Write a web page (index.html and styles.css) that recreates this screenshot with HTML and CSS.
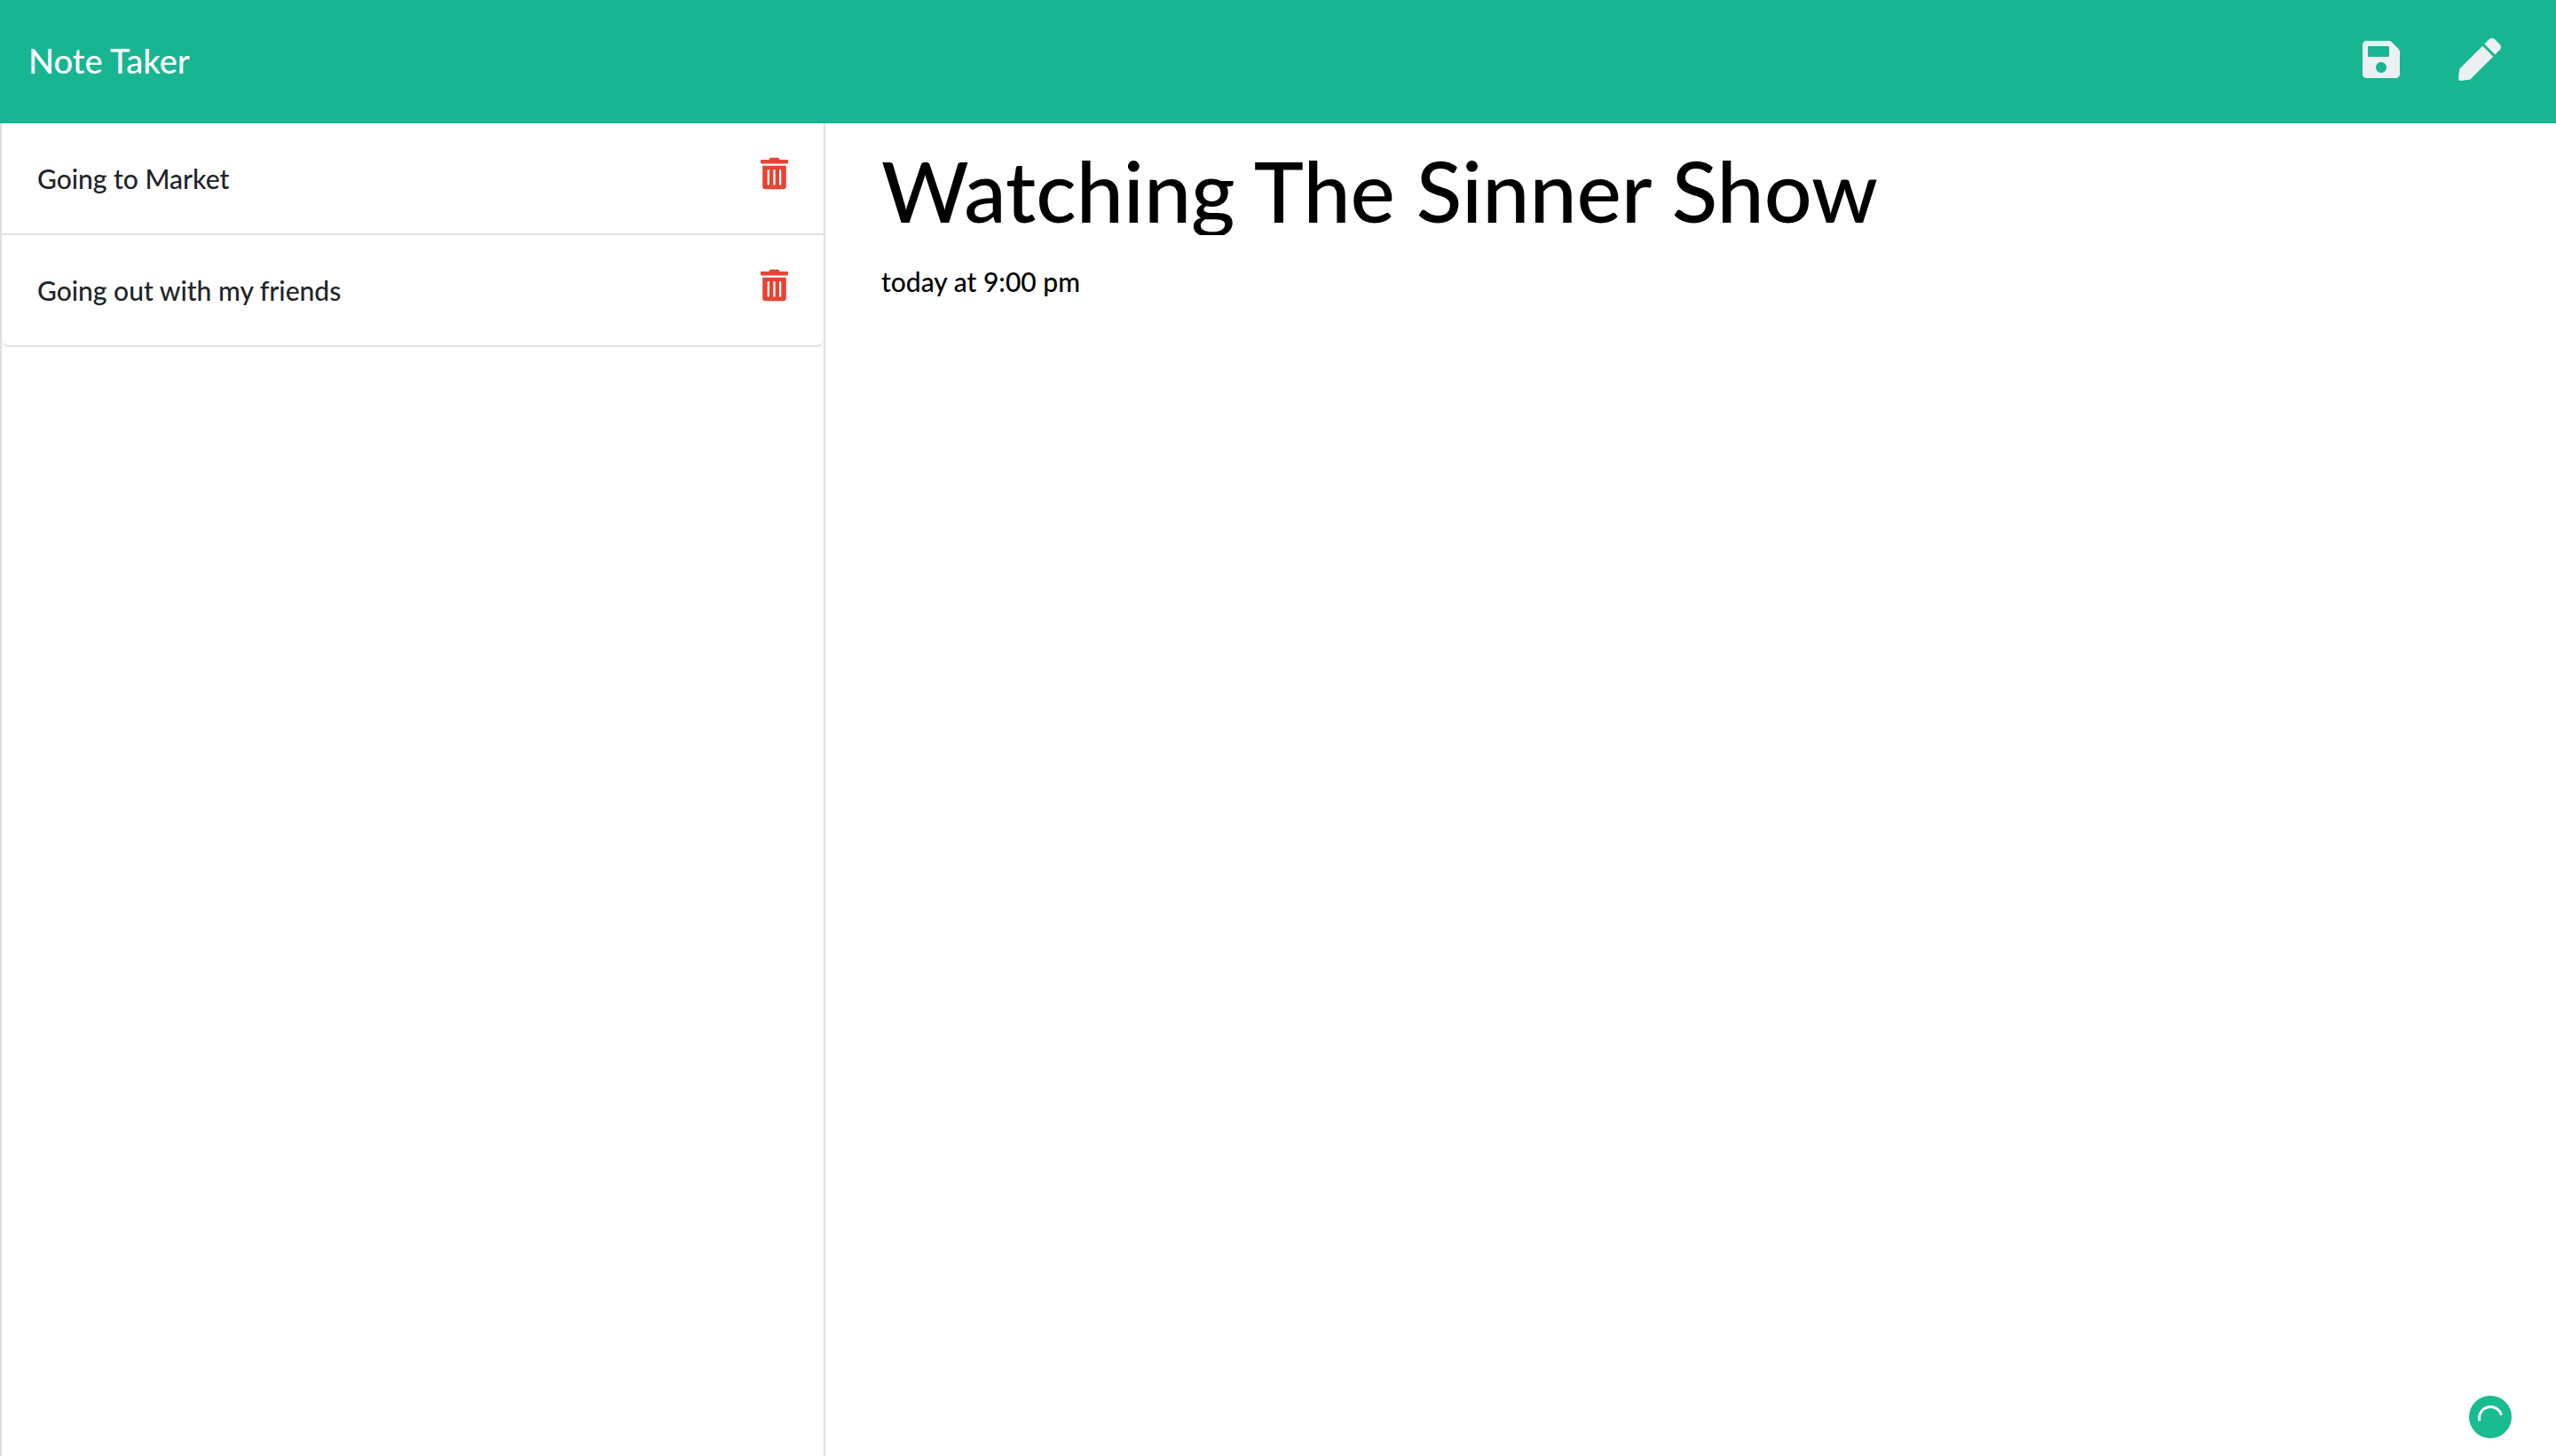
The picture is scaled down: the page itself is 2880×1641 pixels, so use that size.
FILE: index.html
```
<!DOCTYPE html>
<html lang="en">
<head>
<meta charset="utf-8">
<meta name="viewport" content="width=device-width, initial-scale=1">
<title>Note Taker</title>
<link rel="stylesheet" href="styles.css">
</head>
<body>
<header class="navbar">
  <a class="brand" href="#">Note Taker</a>
  <div class="actions">
    <button class="icon-button" type="button" aria-label="Save note">
      <svg class="save-icon" viewBox="0 0 448 512"><path d="M433.941 129.941l-83.882-83.882A48 48 0 0 0 316.118 32H48C21.49 32 0 53.49 0 80v352c0 26.51 21.49 48 48 48h352c26.51 0 48-21.49 48-48V163.882a48 48 0 0 0-14.059-33.941zM224 416c-35.346 0-64-28.654-64-64 0-35.346 28.654-64 64-64s64 28.654 64 64c0 35.346-28.654 64-64 64zm96-304.52V212c0 6.627-5.373 12-12 12H76c-6.627 0-12-5.373-12-12V108c0-6.627 5.373-12 12-12h228.52c3.183 0 6.235 1.264 8.485 3.515l3.48 3.48A11.996 11.996 0 0 1 320 111.48z"/></svg>
    </button>
    <button class="icon-button" type="button" aria-label="New note">
      <svg class="pen-icon" viewBox="0 0 512 512"><path d="M290.74 93.24l128.02 128.02-277.99 277.99-114.14 12.6C11.35 513.54-1.56 500.62.14 485.34l12.7-114.22 277.9-277.88zm207.2-19.06l-60.11-60.11c-18.75-18.75-49.16-18.75-67.91 0l-56.55 56.55 128.02 128.02 56.55-56.55c18.75-18.76 18.75-49.16 0-67.91z"/></svg>
    </button>
  </div>
</header>
<main class="layout">
  <nav class="sidebar" aria-label="Notes">
    <ul class="note-list">
      <li class="note-item">
        <a class="note-link" href="#">Going to Market</a>
        <button class="icon-button delete" type="button" aria-label="Delete Going to Market">
          <svg class="trash-icon" viewBox="0 0 448 512"><path d="M32 464a48 48 0 0 0 48 48h288a48 48 0 0 0 48-48V128H32zm272-256a16 16 0 0 1 32 0v224a16 16 0 0 1-32 0zm-96 0a16 16 0 0 1 32 0v224a16 16 0 0 1-32 0zm-96 0a16 16 0 0 1 32 0v224a16 16 0 0 1-32 0zM432 32H312l-9.4-18.7A24 24 0 0 0 281.1 0H166.8a23.72 23.72 0 0 0-21.4 13.3L136 32H16A16 16 0 0 0 0 48v32a16 16 0 0 0 16 16h416a16 16 0 0 0 16-16V48a16 16 0 0 0-16-16z"/></svg>
        </button>
      </li>
      <li class="note-item">
        <a class="note-link" href="#">Going out with my friends</a>
        <button class="icon-button delete" type="button" aria-label="Delete Going out with my friends">
          <svg class="trash-icon" viewBox="0 0 448 512"><path d="M32 464a48 48 0 0 0 48 48h288a48 48 0 0 0 48-48V128H32zm272-256a16 16 0 0 1 32 0v224a16 16 0 0 1-32 0zm-96 0a16 16 0 0 1 32 0v224a16 16 0 0 1-32 0zm-96 0a16 16 0 0 1 32 0v224a16 16 0 0 1-32 0zM432 32H312l-9.4-18.7A24 24 0 0 0 281.1 0H166.8a23.72 23.72 0 0 0-21.4 13.3L136 32H16A16 16 0 0 0 0 48v32a16 16 0 0 0 16 16h416a16 16 0 0 0 16-16V48a16 16 0 0 0-16-16z"/></svg>
        </button>
      </li>
    </ul>
  </nav>
  <form class="editor">
    <input class="note-title" type="text" aria-label="Note title" value="Watching The Sinner Show">
    <textarea class="note-text" aria-label="Note text">today at 9:00 pm</textarea>
  </form>
</main>
<div class="status-badge" role="status" aria-label="Loading">
  <svg viewBox="0 0 48 48"><circle class="disc" cx="24" cy="24" r="24"/><path class="arc" d="M12 28.3A12.6 12.6 0 1 1 36.4 22"/></svg>
</div>
</body>
</html>
```
FILE: styles.css
```
*, *::before, *::after {
  box-sizing: border-box;
}

body {
  display: flex;
  flex-direction: column;
  min-height: 100vh;
  margin: 0;
  background: #fff;
  color: #212529;
  font-family: Lato, "Liberation Sans", sans-serif;
  font-size: 30px;
  font-weight: 500;
  line-height: 48px;
}

a {
  color: inherit;
  text-decoration: none;
}

svg {
  display: block;
  fill: currentColor;
}

.navbar {
  display: flex;
  align-items: center;
  justify-content: space-between;
  padding: 38px 62px 41px 32px;
  background: #18b592;
  color: #fff;
}

.brand {
  font-size: 38px;
  line-height: 60px;
}

.actions {
  display: flex;
  gap: 66px;
  color: #ecf0f1;
}

.icon-button {
  padding: 0;
  border: 0;
  background: none;
  color: inherit;
  cursor: pointer;
}

.actions .icon-button {
  padding-bottom: 2px;
}

.save-icon {
  width: 42px;
  height: 48px;
}

.pen-icon {
  width: 48px;
  height: 48px;
}

.layout {
  display: grid;
  flex: 1;
  grid-template-columns: 1fr 2fr;
}

.sidebar {
  margin-right: 30px;
  border: solid #dfdfdf;
  border-width: 0 2px;
}

.note-list {
  margin: 0;
  padding: 0;
  list-style: none;
}

.note-item {
  display: flex;
  align-items: flex-start;
  justify-content: space-between;
  padding: 38px 40px;
  border-bottom: 2px solid #dfdfdf;
}

.note-item:last-child {
  border-radius: 0 0 8px 8px;
}

.delete {
  color: #e64434;
}

.trash-icon {
  width: 31px;
  height: 37px;
}

.editor {
  display: flex;
  flex-direction: column;
  gap: 28px;
  padding: 24px 30px 0;
}

.note-title,
.note-text {
  width: 100%;
  padding: 0 3px;
  border: 0;
  outline: 0;
  background: none;
  color: #000;
  font-family: inherit;
  font-weight: inherit;
}

.note-title {
  height: 102px;
  font-size: 95px;
  line-height: 102px;
}

.note-text {
  flex: 1;
  font-size: 30px;
  line-height: 48px;
  resize: none;
}

.status-badge {
  position: fixed;
  right: 50px;
  bottom: 20px;
  width: 48px;
  height: 48px;
}

.disc {
  fill: #19bb91;
}

.arc {
  fill: none;
  stroke: #fff;
  stroke-width: 3;
}
```
